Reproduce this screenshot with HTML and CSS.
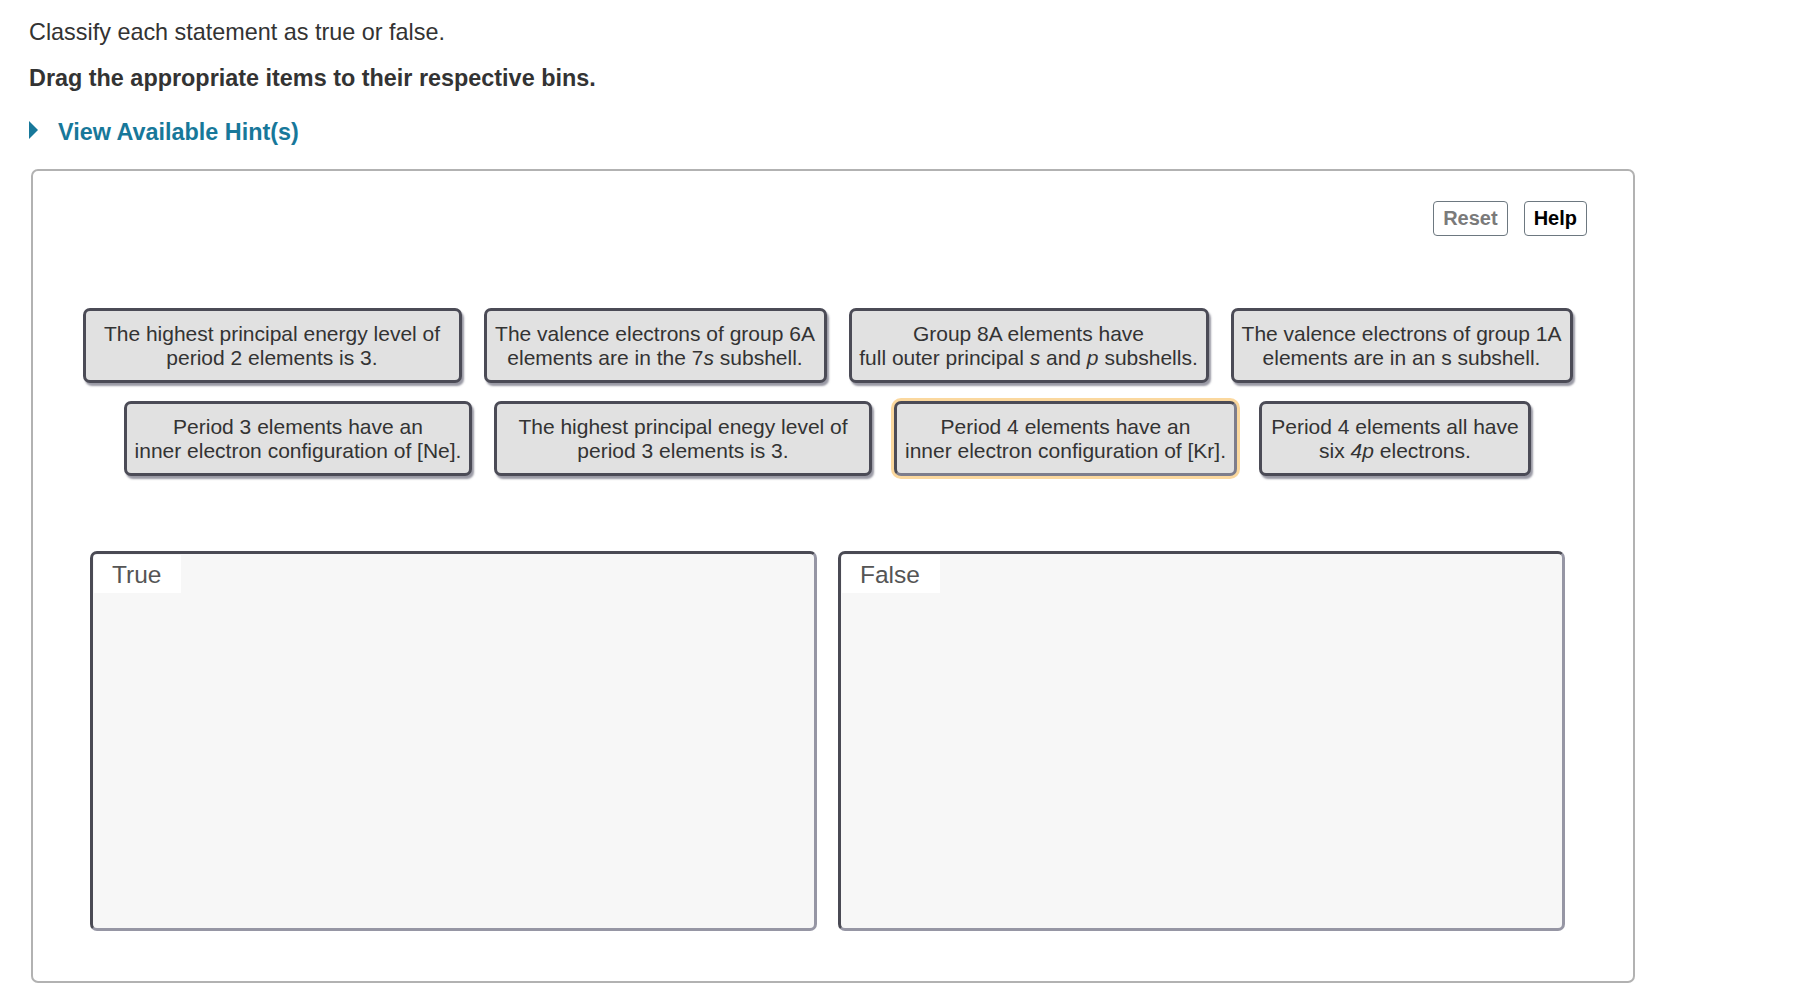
FILE: index.html
```html
<!DOCTYPE html>
<html>
<head>
<meta charset="utf-8">
<link rel="stylesheet" href="styles.css">
</head>
<body>
<div class="page">
  <p class="intro">Classify each statement as true or false.</p>
  <p class="instr">Drag the appropriate items to their respective bins.</p>
  <div class="hint"><span class="tri"></span><span class="hint-text">View Available Hint(s)</span></div>

  <div class="panel">
    <div class="toolbar">
      <button class="btn btn-reset">Reset</button>
      <button class="btn btn-help">Help</button>
    </div>
    <div class="work">
      <div class="cards">
        <div class="row">
          <div class="card c1"><span class="card-text">The highest principal energy level of<br>period 2 elements is 3.</span></div>
          <div class="card c2"><span class="card-text">The valence electrons of group 6A<br>elements are in the 7<i>s</i> subshell.</span></div>
          <div class="card c3"><span class="card-text">Group 8A elements have<br>full outer principal <i>s</i> and <i>p</i> subshells.</span></div>
          <div class="card c4"><span class="card-text">The valence electrons of group 1A<br>elements are in an s subshell.</span></div>
        </div>
        <div class="row">
          <div class="card c5"><span class="card-text">Period 3 elements have an<br>inner electron configuration of [Ne].</span></div>
          <div class="card c6"><span class="card-text">The highest principal enegy level of<br>period 3 elements is 3.</span></div>
          <div class="card c7 selected"><span class="card-text">Period 4 elements have an<br>inner electron configuration of [Kr].</span></div>
          <div class="card c8"><span class="card-text">Period 4 elements all have<br>six <i>4p</i> electrons.</span></div>
        </div>
      </div>
      <div class="bins">
        <div class="bin"><span class="bin-label">True</span></div>
        <div class="bin"><span class="bin-label">False</span></div>
      </div>
    </div>
  </div>
</div>
</body>
</html>
```

FILE: styles.css
```css
html, body {
  margin: 0;
  padding: 0;
  background: #ffffff;
}
body {
  font-family: "Liberation Sans", Arial, Helvetica, sans-serif;
  color: #333333;
}
.page {
  padding: 19px 0 0 29px;
}
.intro {
  margin: 0;
  font-size: 23.4px;
  line-height: 27px;
}
.instr {
  margin: 19px 0 0;
  font-size: 23.4px;
  line-height: 27px;
  font-weight: bold;
}
.hint {
  margin-top: 27px;
  display: flex;
  align-items: center;
  height: 27px;
  color: #17789a;
  font-size: 23.4px;
  font-weight: bold;
}
.tri {
  width: 0;
  height: 0;
  border-left: 9px solid #17789a;
  border-top: 9px solid transparent;
  border-bottom: 9px solid transparent;
  margin-right: 20px;
  margin-top: -6px;
}
.panel {
  margin: 23px 0 0 2px;
  width: 1604px;
  height: 814px;
  box-sizing: border-box;
  border: 2px solid #b2b2b2;
  border-radius: 7px;
  padding: 30px 46px 0 57px;
}
.toolbar {
  display: flex;
  justify-content: flex-end;
  gap: 16px;
}
.btn {
  height: 35px;
  box-sizing: border-box;
  border: 1.5px solid #6d7880;
  border-radius: 4px;
  background: #ffffff;
  font-family: "Liberation Sans", Arial, sans-serif;
  font-weight: bold;
  font-size: 20px;
  padding: 0 9px;
}
.btn-reset { color: #7a7a7a; }
.btn-help { color: #000000; }
.work {
  width: 1475px;
}
.cards {
  margin-top: 72px;
  display: flex;
  flex-direction: column;
  gap: 18px;
}
.row {
  display: flex;
  justify-content: center;
  gap: 22px;
}
.card {
  flex-shrink: 0;
  height: 75px;
  box-sizing: border-box;
  border: 3px solid #4b4b56;
  border-radius: 7px;
  background: #e1e1e1;
  box-shadow: 2px 3px 2px rgba(70, 70, 90, 0.55);
  font-size: 21px;
  line-height: 23.5px;
  color: #333333;
  text-align: center;
  display: flex;
  align-items: center;
  justify-content: center;
}
.card-text {
  display: block;
}
.c1 { width: 379px; }
.c2 { width: 343px; }
.c3 { width: 360px; }
.c4 { width: 342px; }
.c5 { width: 348px; }
.c6 { width: 378px; }
.c7 { width: 343px; }
.c8 { width: 272px; }
.card.selected {
  border-right-color: #7d7d8c;
  border-bottom-color: #7d7d8c;
  box-shadow: 0 0 0 3px #fbd89e;
}
.bins {
  margin-top: 75px;
  display: grid;
  grid-template-columns: 727px 727px;
  gap: 21px;
}
.bin {
  height: 380px;
  box-sizing: border-box;
  border: 3px solid #4a4a54;
  border-right-color: #9696a4;
  border-bottom-color: #9696a4;
  border-radius: 7px;
  background: #f7f7f7;
  padding: 1px;
}
.bin-label {
  display: inline-block;
  height: 38px;
  line-height: 40px;
  padding: 0 20px 0 18px;
  background: #ffffff;
  color: #555555;
  font-size: 24.5px;
}
```
